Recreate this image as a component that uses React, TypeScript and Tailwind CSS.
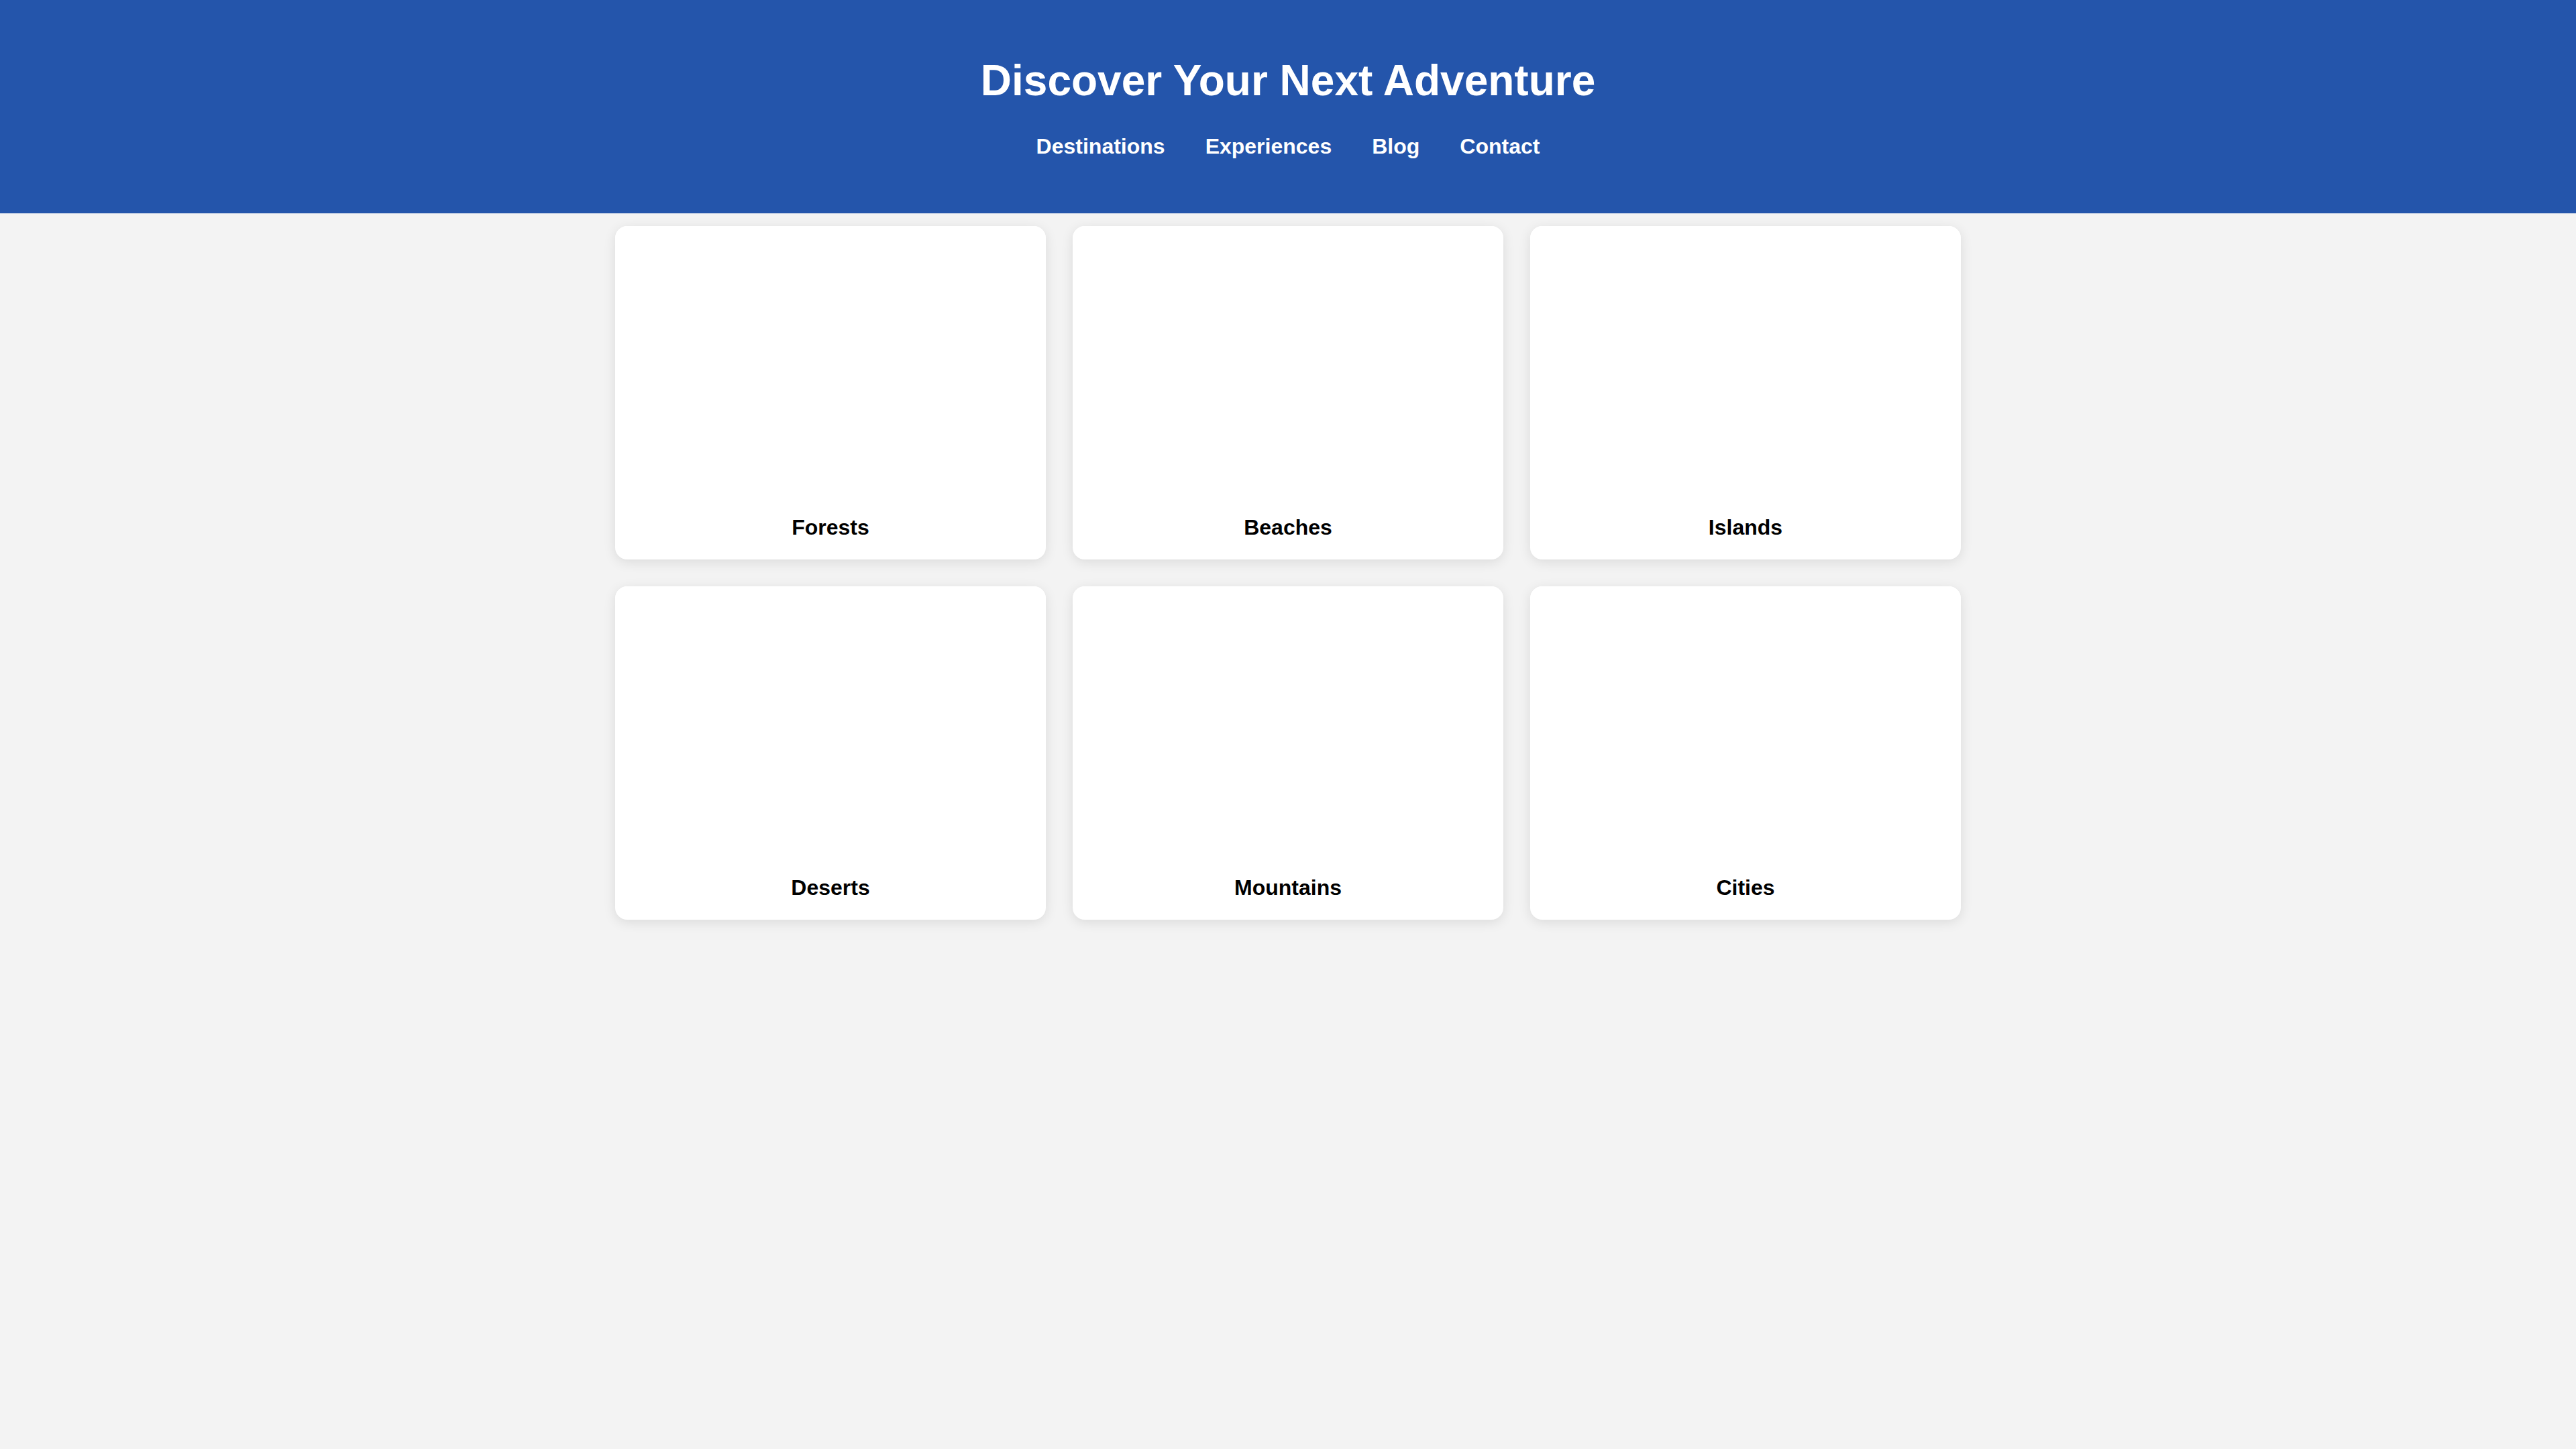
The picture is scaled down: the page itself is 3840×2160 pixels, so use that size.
const categories = ["Forests", "Beaches", "Islands", "Deserts", "Mountains", "Cities"];
const links = ["Destinations", "Experiences", "Blog", "Contact"];

function CategoryCard({ name }: { name: string }) {
  return (
    <div className="overflow-hidden rounded-[18px] bg-white shadow-[0_4px_18px_rgba(0,0,0,0.1)]">
      <div className="h-[399px] bg-white" />
      <h2 className="px-8 pt-8 pb-[30px] text-center text-[32px] leading-[36px] font-bold text-black">{name}</h2>
    </div>
  );
}

export default function App() {
  return (
    <div className="min-h-screen bg-[#f3f3f3] font-['Liberation_Sans',Arial,sans-serif]">
      <header className="bg-[#2455ab] pt-[84px] pb-[82px] text-center text-white">
        <h1 className="text-[64px] leading-[72px] font-bold">Discover Your Next Adventure</h1>
        <nav className="mt-[44px] flex justify-center gap-[60px] text-[32px] leading-[36px] font-bold">
          {links.map((l) => (
            <a key={l} href="#" className="text-white">
              {l}
            </a>
          ))}
        </nav>
      </header>
      <main className="grid grid-cols-[repeat(3,642px)] justify-center gap-[40px] pt-[19px] pb-10">
        {categories.map((c) => (
          <CategoryCard key={c} name={c} />
        ))}
      </main>
    </div>
  );
}
